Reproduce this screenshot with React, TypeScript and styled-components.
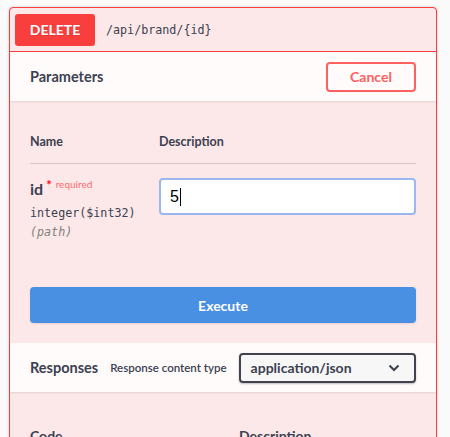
import React from "react";
import styled, { createGlobalStyle } from "styled-components";

const Global = createGlobalStyle`
  html, body { margin: 0; padding: 0; background: #fafafa; }
  body { font-family: Lato, "Open Sans", sans-serif; color: #3b4151; }
  * { box-sizing: border-box; }
`;

const Page = styled.div`
  padding: 7px 13px 0 9px;
  height: 437px;
  overflow: hidden;
`;

const Block = styled.div`
  border: 1px solid #f93e3e;
  border-radius: 4px;
  background: #fce8e8;
  box-shadow: 0 0 3px rgba(0, 0, 0, 0.19);
  min-height: 500px;
`;

const Summary = styled.div`
  display: flex;
  align-items: center;
  padding: 5px;
  border-bottom: 1px solid #f93e3e;
  height: 44px;
`;

const Method = styled.span`
  width: 80px;
  height: 32px;
  display: flex;
  align-items: center;
  justify-content: center;
  background: #f93e3e;
  color: #fff;
  font-weight: 700;
  font-size: 14px;
  border-radius: 3px;
  text-shadow: 0 1px 0 rgba(0, 0, 0, 0.1);
`;

const Path = styled.span`
  font-family: "DejaVu Sans Mono", monospace;
  font-size: 11.7px;
  color: #3b4151;
  padding-left: 11px;
`;

const SectionHeader = styled.div`
  display: flex;
  align-items: center;
  height: 49px;
  padding: 0 20px;
  background: rgba(255, 255, 255, 0.8);
  box-shadow: 0 1px 2px rgba(0, 0, 0, 0.1);
  gap: 12px;
`;

const SectionTitle = styled.h4<{ $grow?: boolean }>`
  margin: 0;
  flex: ${(p) => (p.$grow ? 1 : "none")};
  font-size: 14.5px;
  font-weight: 700;
  color: #3b4151;
  white-space: nowrap;
`;

const CancelButton = styled.button`
  width: 90px;
  height: 30px;
  border: 2px solid #ff6060;
  border-radius: 4px;
  background: transparent;
  color: #ff6060;
  font-family: inherit;
  font-weight: 700;
  font-size: 14px;
  padding: 0;
`;

const TableWrap = styled.div`
  padding: 20px 20px 0;
`;

const HeadRow = styled.div`
  display: grid;
  grid-template-columns: 129px 1fr;
  padding: 12px 0;
  border-bottom: 1px solid rgba(59, 65, 81, 0.2);
  font-size: 12.5px;
  font-weight: 700;
  line-height: 18px;
`;

const Row = styled.div`
  display: grid;
  grid-template-columns: 129px 1fr;
  padding: 14px 0 0;
`;

const NameCell = styled.div`
  display: flex;
  flex-direction: column;
`;

const ParamName = styled.div`
  font-size: 16px;
  font-weight: 700;
  line-height: 22px;
  color: #3b4151;
`;

const Star = styled.span`
  color: #f00;
  font-size: 13px;
  position: relative;
  top: -5px;
  margin-left: 3px;
`;

const Required = styled.span`
  color: rgba(255, 0, 0, 0.6);
  font-size: 10px;
  font-weight: 400;
  position: relative;
  top: -7px;
  margin-left: 4px;
`;

const ParamType = styled.div`
  font-family: "DejaVu Sans Mono", monospace;
  font-size: 11.7px;
  line-height: 16px;
  margin-top: 3px;
  color: #3b4151;
`;

const ParamIn = styled.div`
  font-family: "DejaVu Sans Mono", monospace;
  font-size: 11.7px;
  font-style: italic;
  color: gray;
  line-height: 16px;
  margin-top: 3px;
`;

const InputBox = styled.div`
  height: 37px;
  border: 2px solid #9cb6ef;
  border-radius: 4px;
  background: #fff;
  display: flex;
  align-items: center;
  padding-left: 9px;
  font-family: "Liberation Sans", Arial, sans-serif;
  font-size: 16px;
  color: #000;
`;

const Caret = styled.span`
  display: inline-block;
  width: 1px;
  height: 18px;
  background: #000;
  margin-left: 1px;
`;

const ExecuteWrap = styled.div`
  padding: 47px 20px 20px;
`;

const ExecuteButton = styled.button`
  width: 100%;
  height: 36px;
  border: none;
  border-radius: 4px;
  background: #4990e2;
  color: #fff;
  font-family: inherit;
  font-weight: 700;
  font-size: 14px;
  box-shadow: 0 1px 2px rgba(0, 0, 0, 0.1);
`;

const ContentTypeLabel = styled.span`
  font-size: 11.5px;
  font-weight: 600;
  color: #3b4151;
  white-space: nowrap;
`;

const Select = styled.div`
  flex: 0 1 180px;
  min-width: 0;
  height: 30px;
  margin-left: auto;
  border: 2px solid #41444e;
  border-radius: 4px;
  background: #f7f7f7;
  box-shadow: 0 1px 2px rgba(0, 0, 0, 0.25);
  display: flex;
  align-items: center;
  justify-content: space-between;
  padding: 0 14px 0 10px;
  font-weight: 700;
  font-size: 14px;
  color: #3b4151;
  white-space: nowrap;
`;

const RespHead = styled.div`
  display: grid;
  grid-template-columns: 209px 1fr;
  padding: 35px 20px 0;
  font-size: 14px;
  font-weight: 700;
  line-height: 18px;
`;

export default function App() {
  return (
    <>
      <Global />
      <Page>
        <Block>
          <Summary>
            <Method>DELETE</Method>
            <Path>/api/brand/&#123;id&#125;</Path>
          </Summary>
          <SectionHeader>
            <SectionTitle $grow>Parameters</SectionTitle>
            <CancelButton>Cancel</CancelButton>
          </SectionHeader>
          <TableWrap>
            <HeadRow>
              <div>Name</div>
              <div>Description</div>
            </HeadRow>
            <Row>
              <NameCell>
                <ParamName>
                  id<Star>*</Star>
                  <Required>required</Required>
                </ParamName>
                <ParamType>integer($int32)</ParamType>
                <ParamIn>(path)</ParamIn>
              </NameCell>
              <div>
                <InputBox>
                  5<Caret />
                </InputBox>
              </div>
            </Row>
          </TableWrap>
          <ExecuteWrap>
            <ExecuteButton>Execute</ExecuteButton>
          </ExecuteWrap>
          <SectionHeader>
            <SectionTitle>Responses</SectionTitle>
            <ContentTypeLabel>Response content type</ContentTypeLabel>
            <Select>
              <span>application/json</span>
              <svg width="12" height="8" viewBox="0 0 12 8">
                <path d="M1.5 1.5 L6 6 L10.5 1.5" fill="none" stroke="#3b4151" strokeWidth="2" />
              </svg>
            </Select>
          </SectionHeader>
          <RespHead>
            <div>Code</div>
            <div>Description</div>
          </RespHead>
        </Block>
      </Page>
    </>
  );
}
